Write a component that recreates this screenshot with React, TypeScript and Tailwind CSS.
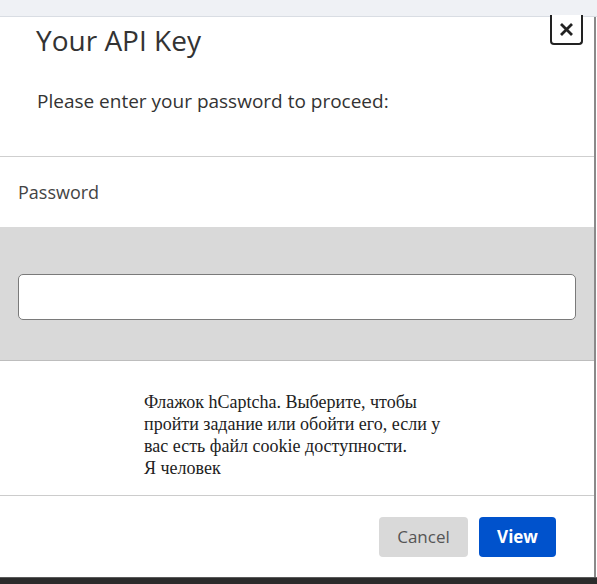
import React from "react";

export default function App() {
  const sans = { fontFamily: '"Open Sans", "Noto Sans", sans-serif' };
  return (
    <div className="w-[597px] h-[584px] bg-white flex flex-col overflow-hidden" style={sans}>
      <div className="h-[17px] shrink-0 bg-[#eff1f5] border-b border-[#d9dde3]" />
      <div className="flex-1 flex flex-col w-[596px] border-r-2 border-[#8a8a8a] bg-white">
        <div className="relative h-[140px] shrink-0 border-b border-[#cfcfcf]">
          <h1 className="absolute left-[36px] top-[4px] text-[28px] leading-[38px] text-[#333] font-normal">
            Your API Key
          </h1>
          <p className="absolute left-[37px] top-[71px] text-[19px] leading-[26px] text-[#333]">
            Please enter your password to proceed:
          </p>
          <button className="absolute right-[11px] top-[-2px] w-[33px] h-[30px] border-2 border-t-0 border-[#222] rounded-b-[4px] flex items-center justify-center bg-white">
            <svg width="15" height="15" viewBox="0 0 15 15">
              <path d="M2 2 L13 13 M13 2 L2 13" stroke="#222" strokeWidth="2.8" strokeLinecap="butt" />
            </svg>
          </button>
        </div>
        <div className="h-[70px] shrink-0 flex items-center pl-[18px]">
          <span className="text-[18px] text-[#444]">Password</span>
        </div>
        <div className="h-[134px] shrink-0 bg-[#d9d9d9] border-b border-[#bdbdbd] pt-[47px] px-[18px]">
          <input
            type="password"
            className="w-full h-[46px] bg-white border border-[#7a7a7a] rounded-[5px] outline-none"
          />
        </div>
        <div
          className="h-[135px] shrink-0 border-b border-[#cccccc] pl-[144px] pt-[30px] text-[18px] leading-[22px] text-[#222]"
          style={{ fontFamily: '"Liberation Serif", "Times New Roman", serif' }}
        >
          <div>Флажок hCaptcha. Выберите, чтобы</div>
          <div>пройти задание или обойти его, если у</div>
          <div>вас есть файл cookie доступности.</div>
          <div>Я человек</div>
        </div>
        <div className="flex-1 flex items-start justify-end gap-[11px] pt-[21px] pr-[38px]">
          <button className="w-[89px] h-[40px] rounded-[4px] bg-[#d9d9d9] text-[17px] text-[#555]">Cancel</button>
          <button className="w-[77px] h-[40px] rounded-[4px] bg-[#0052cc] text-[17px] font-bold text-white">View</button>
        </div>
      </div>
      <div className="h-[7px] shrink-0 bg-[#2b2b2b] border-t border-[#5a5a5a]" />
    </div>
  );
}
